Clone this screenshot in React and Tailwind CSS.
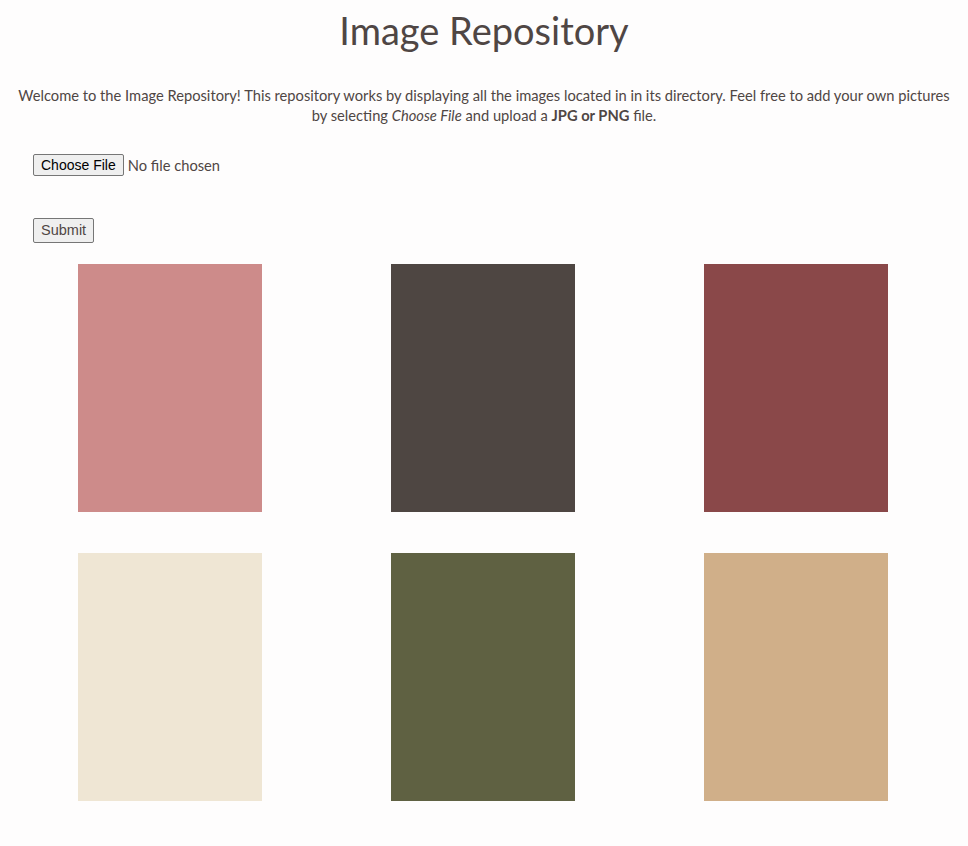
import React from 'react';

const colors = ['#cd8b8a', '#4e4642', '#8a4849', '#efe6d4', '#5f6142', '#d0af89'];

const App = () => {
  return (
    <div className="min-h-[846px] bg-[#fefdfd] text-[#4f4644] font-['Lato','Noto_Sans',sans-serif]">
      <h1 className="pt-[9px] text-center text-[38px] leading-[42px] font-normal">Image Repository</h1>

      <p className="mt-[34px] px-[14px] text-center text-[14.7px] leading-[20px]">
        Welcome to the Image Repository! This repository works by displaying all the images located in in its directory. Feel free to add your own pictures by selecting <em>Choose File</em> and upload a <strong>JPG or PNG</strong> file.
      </p>

      <form className="px-[33px] pt-[29px]" onSubmit={e => e.preventDefault()}>
        <div className="flex items-center gap-[4px]">
          <button
            type="button"
            className="h-[22px] px-[7px] border border-[#767676] rounded-[2px] bg-[#efefef] text-black text-[14px] font-['Liberation_Sans',Arial,sans-serif] leading-none"
          >
            Choose File
          </button>
          <span className="text-[14.7px]">No file chosen</span>
        </div>
        <button
          type="submit"
          className="mt-[42px] h-[25px] px-[7px] border border-[#767676] rounded-[2px] bg-[#efefef] text-[#4f4644] text-[14.5px] font-['Liberation_Sans',Arial,sans-serif] leading-none"
        >
          Submit
        </button>
      </form>

      <div className="mt-[21px] ml-[14px] grid grid-cols-[313px_313px_313px] gap-y-[41px]">
        {colors.map(c => (
          <div key={c} className="pl-[64px]">
            <div className="w-[184px] h-[248px]" style={{ backgroundColor: c }} />
          </div>
        ))}
      </div>
    </div>
  );
};

export default App;
